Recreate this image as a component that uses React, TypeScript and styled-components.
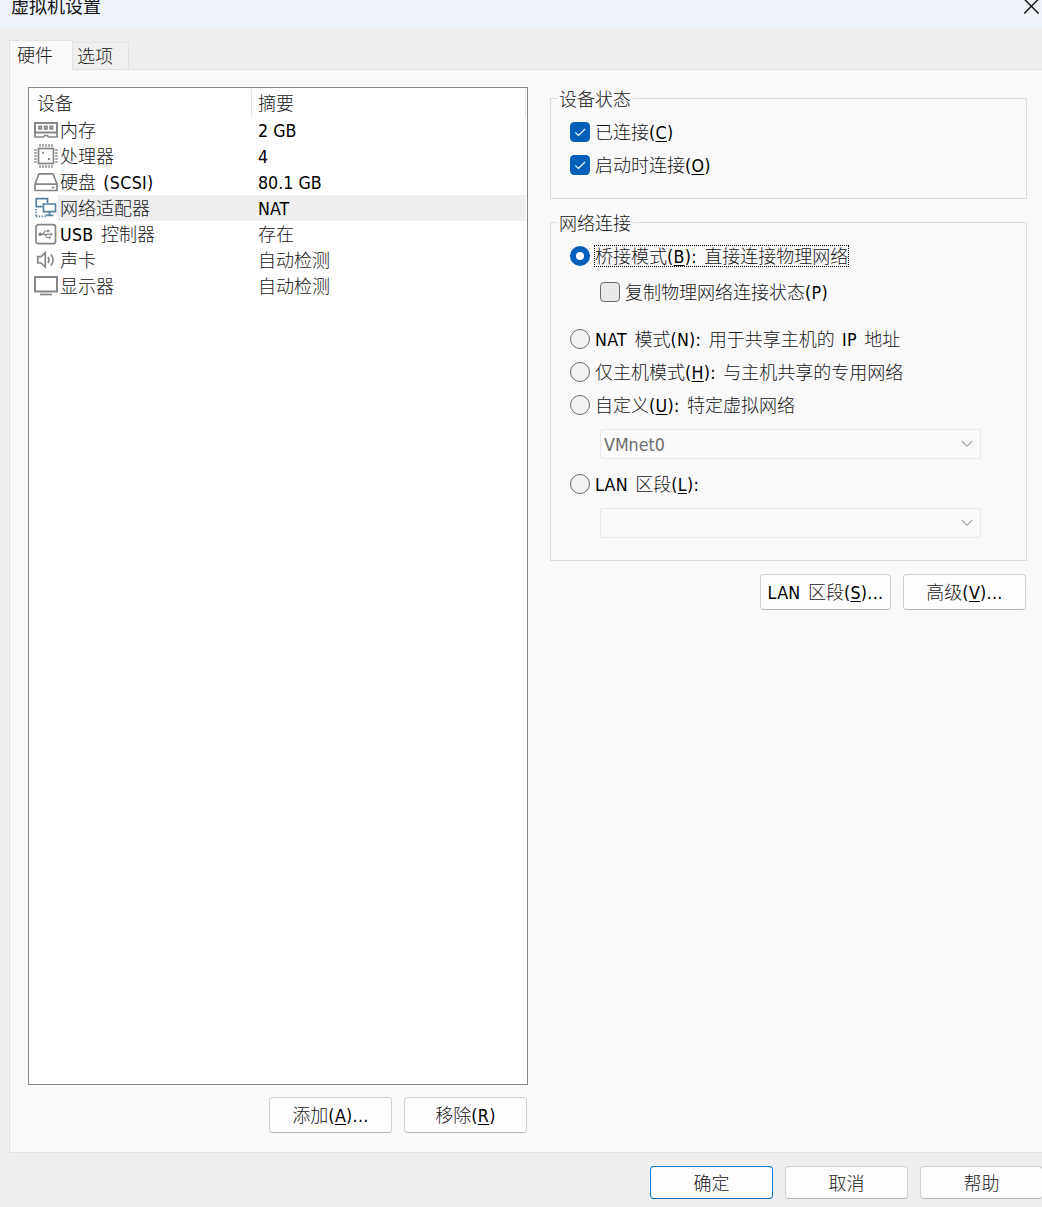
import React from 'react';
import styled, { createGlobalStyle, css } from 'styled-components';

const GlobalStyle = createGlobalStyle`
  *, *::before, *::after { box-sizing: border-box; }
  html, body { margin: 0; padding: 0; overflow: hidden; }
  body {
    font-family: 'DejaVu Sans Condensed', 'DejaVu Sans', 'Noto Sans CJK SC', sans-serif;
    font-size: 18px;
    color: #000;
  }
`;

const Window = styled.div`
  width: 1042px;
  height: 1207px;
  display: flex;
  flex-direction: column;
  overflow: hidden;
  background: #efefef;
`;

const TitleBar = styled.header`
  flex: none;
  height: 29px;
  display: flex;
  justify-content: space-between;
  align-items: flex-start;
  padding-left: 11px;
  background: linear-gradient(90deg, #eff3fc, #edf3f8);
`;

const Title = styled.h1`
  margin: -8px 0 0;
  font: 400 18px/26px 'Noto Sans CJK SC', sans-serif;
  color: #111;
`;

const CloseButton = styled.button`
  width: 19px;
  height: 15px;
  padding: 0;
  border: 0;
  background: none;
  svg { display: block; }
`;

const TabStrip = styled.nav`
  flex: none;
  height: 41px;
  display: flex;
  align-items: flex-end;
  padding-left: 9px;
  margin-bottom: -1px;
  z-index: 1;
`;

const Tab = styled.button<{ $active?: boolean }>`
  height: ${(p) => (p.$active ? 30 : 27)}px;
  width: ${(p) => (p.$active ? 64 : 56)}px;
  margin: 0;
  padding: 0 0 ${(p) => (p.$active ? 2 : 1)}px ${(p) => (p.$active ? 7 : 4)}px;
  display: flex;
  align-items: center;
  border: 1px solid #e2e2e2;
  border-bottom: 0;
  font: inherit;
  ${(p) =>
    p.$active
      ? css`
          background: #f9f9f9;
        `
      : css`
          background: #f0f0f0;
          border-left: 0;
          margin-bottom: 1px;
        `}
`;

const Page = styled.main`
  flex: none;
  height: 1084px;
  margin-left: 9px;
  padding: 17px 15px 0 18px;
  display: flex;
  gap: 22px;
  background: #f9f9f9;
  border: 1px solid #e2e2e2;
  border-right: 0;
`;

const DevicePane = styled.section`
  width: 500px;
  flex: none;
  display: flex;
  flex-direction: column;
`;

const DeviceList = styled.div`
  height: 998px;
  border: 1px solid #828790;
  background: #fff;
  padding-right: 1px;
`;

const ListHeader = styled.div`
  height: 29px;
  display: grid;
  grid-template-columns: 223px 1fr;
  padding: 1px 0;
`;

const HeaderCell = styled.div<{ $indent: number }>`
  display: flex;
  align-items: center;
  padding-left: ${(p) => p.$indent}px;
  padding-top: 1px;
  border-right: 1px solid #e5e5e5;
`;

const DeviceRow = styled.div`
  height: 26px;
  display: grid;
  grid-template-columns: 29px 200px 1fr;
  align-items: center;
`;

const IconCell = styled.div`
  padding-left: 5px;
  svg { display: block; }
`;

const DeviceCell = styled.div<{ $selected?: boolean; $indent?: number }>`
  height: 26px;
  display: flex;
  align-items: center;
  padding-left: ${(p) => p.$indent ?? 0}px;
  background: ${(p) => (p.$selected ? '#efefef' : 'transparent')};
`;

const ButtonRow = styled.div`
  display: flex;
  justify-content: flex-end;
  gap: 12px;
  margin-top: 12px;
  padding-right: 1px;
`;

const PushButton = styled.button<{ $width?: number; $primary?: boolean; $height?: number }>`
  flex: none;
  width: ${(p) => p.$width ?? 123}px;
  height: ${(p) => p.$height ?? 36}px;
  padding: 0;
  display: flex;
  align-items: center;
  justify-content: center;
  border: 1px solid ${(p) => (p.$primary ? '#0078d4' : '#cfcfcf')};
  border-bottom-color: ${(p) => (p.$primary ? '#0067c0' : '#b9b9b9')};
  border-radius: 4px;
  background: #fdfdfd;
  font: inherit;
  color: #000;
`;

const SettingsPane = styled.section`
  width: 477px;
  flex: none;
  padding-top: 3px;
`;

const Group = styled.fieldset<{ $height: number }>`
  min-width: 0;
  height: ${(p) => p.$height}px;
  margin: 0 0 15px;
  padding: 0 0 0 19px;
  border: 1px solid #dcdcdc;

  &:last-of-type {
    margin-bottom: 13px;
  }
`;

const Legend = styled.legend`
  height: 17px;
  margin-left: -13px;
  padding: 0 2px;
  display: flex;
  align-items: center;
`;

const Option = styled.label<{ $top: number; $indent?: number }>`
  height: 20px;
  margin-top: ${(p) => p.$top}px;
  margin-left: ${(p) => p.$indent ?? 0}px;
  display: flex;
  align-items: center;
  gap: 5px;
`;

const CheckBox = styled.span<{ $checked?: boolean }>`
  flex: none;
  width: 20px;
  height: 20px;
  border-radius: 4px;
  border: 1px solid ${(p) => (p.$checked ? '#005fb8' : '#6b6b6b')};
  background: ${(p) => (p.$checked ? '#005fb8' : '#e9e9e9')};
  svg { display: block; }
`;

const Radio = styled.span<{ $checked?: boolean }>`
  flex: none;
  width: 20px;
  height: 20px;
  border-radius: 50%;
  border: ${(p) => (p.$checked ? '6px solid #005fb8' : '1px solid #6b6b6b')};
  background: ${(p) => (p.$checked ? '#fff' : '#f3f3f3')};
`;

const FocusFrame = styled.span`
  height: 22px;
  width: 255px;
  margin-left: -1px;
  display: flex;
  align-items: center;
  border: 1px dotted #000;
`;

const ComboBox = styled.div<{ $top: number }>`
  width: 381px;
  height: 30px;
  margin: ${(p) => p.$top}px 0 0 30px;
  padding: 0 7px 0 3px;
  display: flex;
  align-items: center;
  justify-content: space-between;
  border: 1px solid #e8e8e8;
  border-radius: 2px;
  background: #fafafa;
  color: #6d6d6d;
`;

const Footer = styled.footer`
  display: flex;
  gap: 12px;
  padding: 13px 0 0 650px;
`;

const latinFont = css`
  font: 17.7px/20px 'DejaVu Sans Condensed', 'DejaVu Sans', sans-serif;
`;

const hanFont = css`
  font: 300 18px/20px 'Noto Sans CJK SC', sans-serif;
`;

/* The empty struts keep one baseline whichever scripts the line holds. */
const TextLine = styled.span`
  display: inline-flex;
  align-items: baseline;
  white-space: pre;

  &::before {
    content: '\\200b';
    width: 0;
    ${latinFont}
  }

  &::after {
    content: '\\200b';
    width: 0;
    ${hanFont}
  }
`;

const Latin = styled.span<{ $mixed?: boolean }>`
  ${latinFont}
  letter-spacing: ${(p) => (p.$mixed ? 0.3 : 0)}px;
  word-spacing: ${(p) => (p.$mixed ? 2 : 0)}px;
`;

const Han = styled.span`
  ${hanFont}
  color: #161616;
`;

const Mnemonic = styled.span`
  text-decoration: underline;
  text-decoration-thickness: 1px;
  text-underline-offset: 2px;
`;

/* Splits a caption into Han and Latin runs; "&" marks the access key. */
function Caption({ text }: { text: string }) {
  const runs = text.match(/[\u4e00-\u9fff]+|[^\u4e00-\u9fff]+/g) ?? [];
  const mixed = runs.length > 1;
  return (
    <TextLine>
      {runs.map((run, i) => {
        if (/[\u4e00-\u9fff]/.test(run)) return <Han key={i}>{run}</Han>;
        const at = run.indexOf('&');
        if (at < 0)
          return (
            <Latin key={i} $mixed={mixed}>
              {run}
            </Latin>
          );
        return (
          <Latin key={i} $mixed={mixed}>
            {run.slice(0, at)}
            <Mnemonic>{run[at + 1]}</Mnemonic>
            {run.slice(at + 2)}
          </Latin>
        );
      })}
    </TextLine>
  );
}

const Glyph = ({ children, color = '#868686' }: { children: React.ReactNode; color?: string }) => (
  <svg width="24" height="24" viewBox="0 0 24 24" fill="none" stroke={color} strokeWidth="1.7">
    {children}
  </svg>
);

const MemoryIcon = () => (
  <Glyph>
    <path d="M1 5H23V14.5H1Z" strokeWidth="2" />
    <path d="M5 8.4h2.4v2.4H5zM10.6 8.4h2.4v2.4h-2.4zM16.2 8.4h2.4v2.4h-2.4z" />
    <path d="M1 14V19H9.5L10.5 17.5H13.5L14.5 19H23V14" />
  </Glyph>
);

const CpuIcon = () => (
  <Glyph>
    <rect x="4.5" y="4.5" width="15" height="15" />
    <path
      d="M6 0.3v2.4M9 0.3v2.4M12 0.3v2.4M15 0.3v2.4M18 0.3v2.4M6 21.3v2.4M9 21.3v2.4M12 21.3v2.4M15 21.3v2.4M18 21.3v2.4M0.3 6h2.4M0.3 9h2.4M0.3 12h2.4M0.3 15h2.4M0.3 18h2.4M21.3 6h2.4M21.3 9h2.4M21.3 12h2.4M21.3 15h2.4M21.3 18h2.4"
      strokeWidth="1.5"
    />
    <path d="M8 8.7h2M14 15h2" strokeWidth="2" />
  </Glyph>
);

const DiskIcon = () => (
  <Glyph>
    <path d="M5 3.8H19L23 14V20.5H1V14Z M1 14.2H23" strokeLinejoin="round" />
    <path d="M18 17.5h2.4" />
  </Glyph>
);

const NetworkIcon = () => (
  <Glyph color="#58809f">
    <path d="M8.5 10.7H2.2V2.7H13.5V7M9.5 8H21.5V15.7H9.5ZM15.5 16V19M11.5 19.3H19.5" />
    <path d="M2 13v7.5M2 20.3H12" strokeDasharray="1.3 1.5" />
  </Glyph>
);

const UsbIcon = () => (
  <Glyph>
    <rect x="2" y="2.7" width="19.5" height="19" rx="2.5" />
    <path d="M6 12.3H17M8.5 12.3L11 9H13.5M10.5 12.3L13 15.5H15" strokeWidth="1.2" />
    <circle cx="6.2" cy="12.3" r="1" fill="#868686" />
    <path d="M13.5 8.2h1.6v1.6h-1.6zM15 14.8h1.4v1.4H15z" strokeWidth="1" />
    <path d="M16.5 10.5L19 12.3L16.5 14Z" fill="#868686" stroke="none" />
  </Glyph>
);

const SoundIcon = () => (
  <Glyph>
    <path d="M3.7 8.7H7L11.3 4.7V19L7 15H3.7Z" />
    <path d="M14 9Q16 12 14 15M17 6.5Q21 12 17 17.5" />
  </Glyph>
);

const DisplayIcon = () => (
  <Glyph>
    <rect x="1" y="3" width="22" height="14.5" strokeWidth="2" />
    <path d="M6 20.5H18" />
  </Glyph>
);

const devices = [
  { icon: MemoryIcon, name: '内存', summary: '2 GB' },
  { icon: CpuIcon, name: '处理器', summary: '4' },
  { icon: DiskIcon, name: '硬盘 (SCSI)', summary: '80.1 GB' },
  { icon: NetworkIcon, name: '网络适配器', summary: 'NAT', selected: true },
  { icon: UsbIcon, name: 'USB 控制器', summary: '存在' },
  { icon: SoundIcon, name: '声卡', summary: '自动检测' },
  { icon: DisplayIcon, name: '显示器', summary: '自动检测' },
];

const Tick = () => (
  <svg width="18" height="18" viewBox="0 0 18 18" fill="none" stroke="#fff" strokeWidth="1.1">
    <path d="M4.3 9.3L7.5 12.5L14 6" />
  </svg>
);

const Chevron = () => (
  <svg width="12" height="8" viewBox="0 0 12 8" fill="none" stroke="#a8a8a8" strokeWidth="1.1">
    <path d="M0.8 1L6 6.2L11.2 1" />
  </svg>
);

export default function App() {
  return (
    <>
      <GlobalStyle />
      <Window>
        <TitleBar>
          <Title>虚拟机设置</Title>
          <CloseButton aria-label="关闭">
            <svg width="19" height="15" viewBox="0 0 19 15" stroke="#111" strokeWidth="1.4">
              <path d="M1.2 -1L15.6 13.6M15.6 -1L1.2 13.6" />
            </svg>
          </CloseButton>
        </TitleBar>
        <TabStrip>
          <Tab $active>
            <Caption text="硬件" />
          </Tab>
          <Tab>
            <Caption text="选项" />
          </Tab>
        </TabStrip>
        <Page>
          <DevicePane>
            <DeviceList>
              <ListHeader>
                <HeaderCell $indent={8}>
                  <Caption text="设备" />
                </HeaderCell>
                <HeaderCell $indent={6}>
                  <Caption text="摘要" />
                </HeaderCell>
              </ListHeader>
              {devices.map(({ icon: Icon, name, summary, selected }) => (
                <DeviceRow key={name}>
                  <IconCell>
                    <Icon />
                  </IconCell>
                  <DeviceCell $selected={selected} $indent={2}>
                    <Caption text={name} />
                  </DeviceCell>
                  <DeviceCell $selected={selected}>
                    <Caption text={summary} />
                  </DeviceCell>
                </DeviceRow>
              ))}
            </DeviceList>
            <ButtonRow>
              <PushButton>
                <Caption text="添加(&A)..." />
              </PushButton>
              <PushButton>
                <Caption text="移除(&R)" />
              </PushButton>
            </ButtonRow>
          </DevicePane>
          <SettingsPane>
            <Group $height={109}>
              <Legend>
                <Caption text="设备状态" />
              </Legend>
              <Option $top={15}>
                <CheckBox $checked>
                  <Tick />
                </CheckBox>
                <Caption text="已连接(&C)" />
              </Option>
              <Option $top={13}>
                <CheckBox $checked>
                  <Tick />
                </CheckBox>
                <Caption text="启动时连接(&O)" />
              </Option>
            </Group>
            <Group $height={347}>
              <Legend>
                <Caption text="网络连接" />
              </Legend>
              <Option $top={15}>
                <Radio $checked />
                <FocusFrame>
                  <Caption text="桥接模式(&B): 直接连接物理网络" />
                </FocusFrame>
              </Option>
              <Option $top={16} $indent={30}>
                <CheckBox />
                <Caption text="复制物理网络连接状态(P)" />
              </Option>
              <Option $top={27}>
                <Radio />
                <Caption text="NAT 模式(N): 用于共享主机的 IP 地址" />
              </Option>
              <Option $top={13}>
                <Radio />
                <Caption text="仅主机模式(&H): 与主机共享的专用网络" />
              </Option>
              <Option $top={13}>
                <Radio />
                <Caption text="自定义(&U): 特定虚拟网络" />
              </Option>
              <ComboBox $top={14}>
                <Caption text="VMnet0" />
                <Chevron />
              </ComboBox>
              <Option $top={15}>
                <Radio />
                <Caption text="LAN 区段(&L):" />
              </Option>
              <ComboBox $top={14}>
                <span />
                <Chevron />
              </ComboBox>
            </Group>
            <ButtonRow>
              <PushButton $width={131}>
                <Caption text="LAN 区段(&S)..." />
              </PushButton>
              <PushButton>
                <Caption text="高级(&V)..." />
              </PushButton>
            </ButtonRow>
          </SettingsPane>
        </Page>
        <Footer>
          <PushButton $height={33} $primary>
            <Caption text="确定" />
          </PushButton>
          <PushButton $height={33}>
            <Caption text="取消" />
          </PushButton>
          <PushButton $height={33}>
            <Caption text="帮助" />
          </PushButton>
        </Footer>
      </Window>
    </>
  );
}
